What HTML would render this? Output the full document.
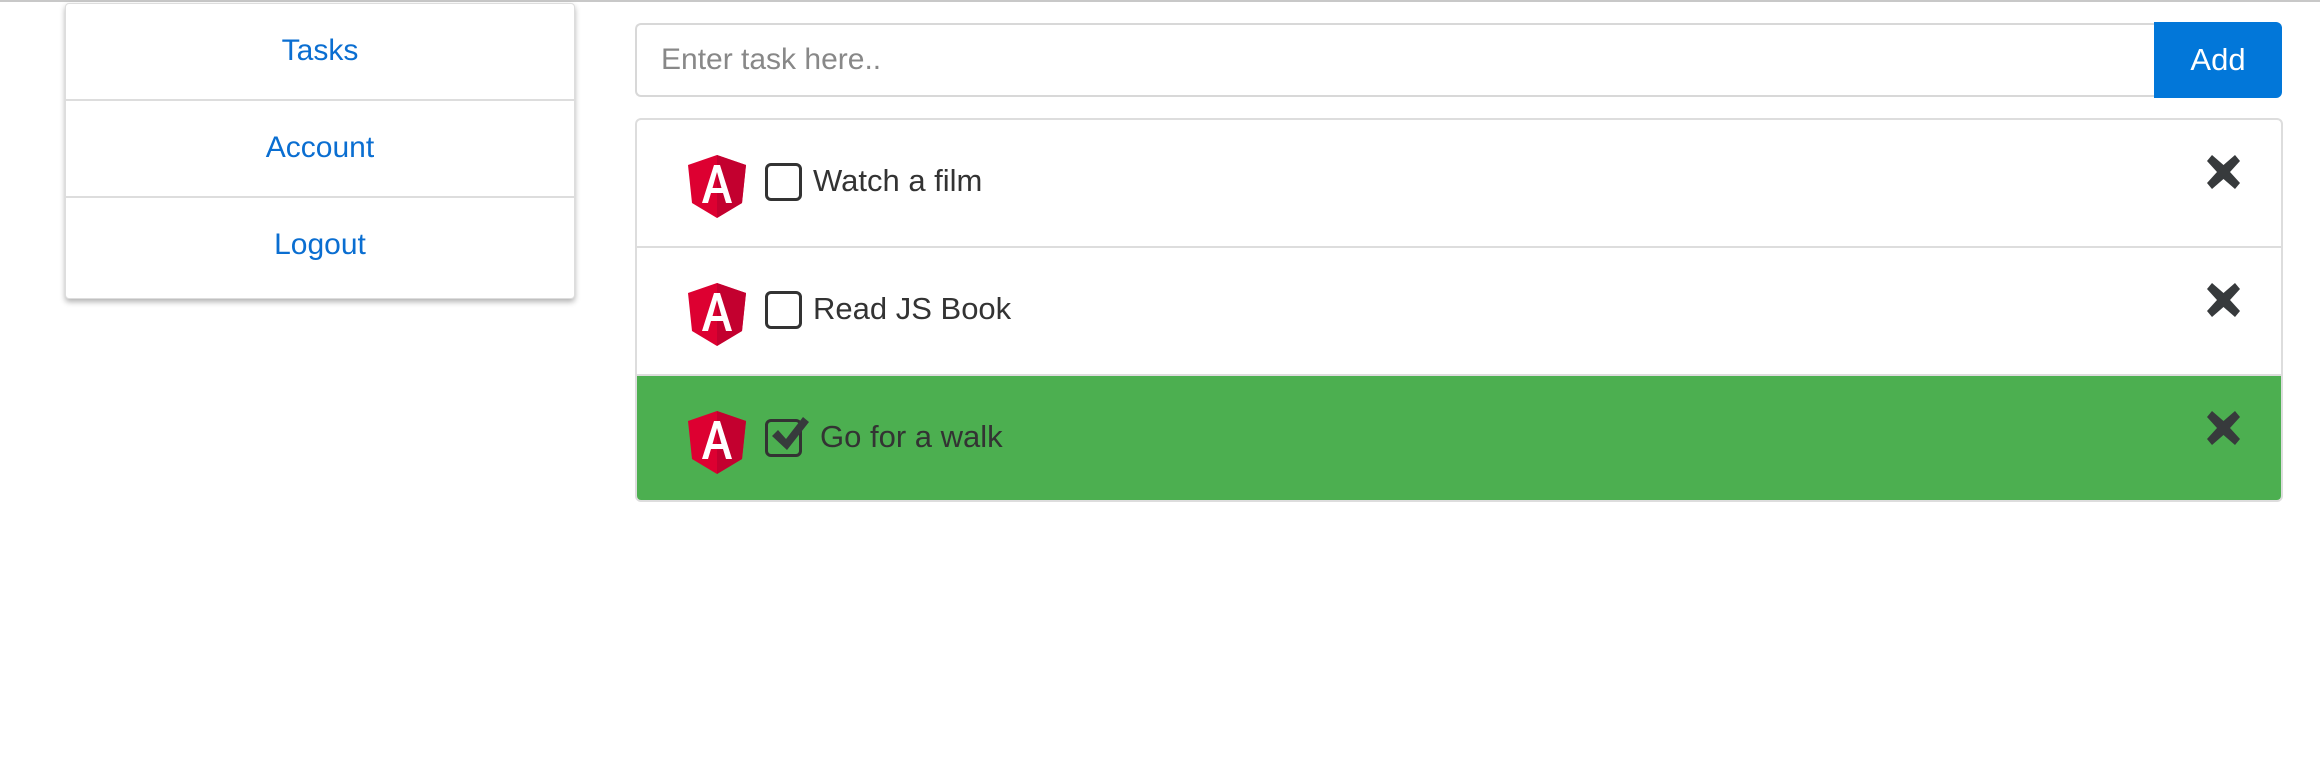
<!DOCTYPE html>
<html><head><style>
body{margin:0;width:2320px;height:776px;background:#fff;font-family:"Liberation Sans",sans-serif;position:relative;overflow:hidden}
.top{position:absolute;left:0;top:0;width:2320px;height:2px;background:#c8c8c8}
.side{position:absolute;left:65px;top:3px;width:508px;height:294px;border:1px solid #ddd;border-radius:4px;box-shadow:0 3px 6px rgba(0,0,0,.3);background:#fff}
.side div{height:97px;border-bottom:2px solid #ddd;box-sizing:border-box;text-align:center;line-height:94px;color:#0a6ed1;font-size:30px}
.side div:last-child{border-bottom:none}
.inp{position:absolute;left:635px;top:23px;width:1519px;height:74px;box-sizing:border-box;border:2px solid #d8d8d8;border-right:none;border-radius:6px 0 0 6px;color:#888;font-size:30px;line-height:70px;padding-left:24px}
.add{position:absolute;left:2154px;top:22px;width:128px;height:76px;background:#0277d9;border-radius:0 6px 6px 0;color:#fff;font-size:31px;line-height:76px;text-align:center}
.list{position:absolute;left:635px;top:118px;width:1648px;height:384px;box-sizing:border-box;border:2px solid #ddd;border-radius:6px;overflow:hidden}
.row{position:absolute;left:0;width:100%;height:128px;box-sizing:border-box}
.row .ng{position:absolute;left:51px;top:35px}
.row .cb{position:absolute;left:128px;top:43px;width:37px;height:38px;box-sizing:border-box;border:3px solid #333;border-radius:6px}
.row .t{position:absolute;left:176px;top:41px;font-size:31px;color:#333;line-height:40px}
.row .x{position:absolute;right:40px;top:35px}
</style></head><body>
<div class="top"></div>
<div class="side"><div>Tasks</div><div>Account</div><div>Logout</div></div>
<div class="inp">Enter task here..</div>
<div class="add">Add</div>
<div class="list">
 <div class="row" style="top:0;border-bottom:2px solid #ddd">
  <svg class="ng" width="58" height="63" viewBox="0 0 58 63"><path d="M29 0L0 10 4 48 29 63 54 48 58 10Z" fill="#dd0031"/><path d="M29 0L58 10 54 48 29 63Z" fill="#c3002f"/><path d="M26 10h6l12 38h-6l-3-10H23l-3 10h-6ZM24.5 33h9L29 17Z" fill="#fff"/></svg>
  <div class="cb"></div><div class="t">Watch a film</div>
  <svg class="x" width="35" height="34" viewBox="0 0 35 34"><path d="M6 0L17.5 10 29 0 34 6 24 17 34 28 29 34 17.5 24 6 34 1 28 11 17 1 6Z" fill="#373a3c"/></svg>
 </div>
 <div class="row" style="top:128px;border-bottom:2px solid #ddd">
  <svg class="ng" width="58" height="63" viewBox="0 0 58 63"><path d="M29 0L0 10 4 48 29 63 54 48 58 10Z" fill="#dd0031"/><path d="M29 0L58 10 54 48 29 63Z" fill="#c3002f"/><path d="M26 10h6l12 38h-6l-3-10H23l-3 10h-6ZM24.5 33h9L29 17Z" fill="#fff"/></svg>
  <div class="cb"></div><div class="t">Read JS Book</div>
  <svg class="x" width="35" height="34" viewBox="0 0 35 34"><path d="M6 0L17.5 10 29 0 34 6 24 17 34 28 29 34 17.5 24 6 34 1 28 11 17 1 6Z" fill="#373a3c"/></svg>
 </div>
 <div class="row" style="top:256px;background:#4caf50;height:130px">
  <svg class="ng" width="58" height="63" viewBox="0 0 58 63"><path d="M29 0L0 10 4 48 29 63 54 48 58 10Z" fill="#dd0031"/><path d="M29 0L58 10 54 48 29 63Z" fill="#c3002f"/><path d="M26 10h6l12 38h-6l-3-10H23l-3 10h-6ZM24.5 33h9L29 17Z" fill="#fff"/></svg>
  <div class="cb"></div>
  <svg style="position:absolute;left:132px;top:38px" width="42" height="40" viewBox="0 0 42 40"><path d="M3 22l6-6 8 9L34 3l6 5-22 28Z" fill="#373a3c"/></svg>
  <div class="t" style="left:183px">Go for a walk</div>
  <svg class="x" width="35" height="34" viewBox="0 0 35 34"><path d="M6 0L17.5 10 29 0 34 6 24 17 34 28 29 34 17.5 24 6 34 1 28 11 17 1 6Z" fill="#373a3c"/></svg>
 </div>
</div>
</body></html>
